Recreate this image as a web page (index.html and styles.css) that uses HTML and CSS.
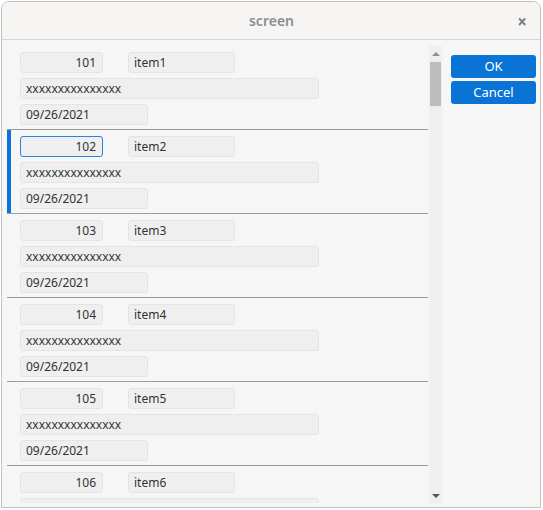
FILE: index.html
```html
<!DOCTYPE html>
<html>
<head>
<meta charset="utf-8">
<link rel="stylesheet" href="styles.css">
</head>
<body>
<div class="window">
  <div class="titlebar">
    <span class="title">screen</span>
    <span class="close">×</span>
  </div>
  <div class="content">
    <div class="listbox">
      <div class="list">
        <div class="row">
          <div class="line"><div class="field num">101</div><div class="field name">item1</div></div>
          <div class="field desc">xxxxxxxxxxxxxxx</div>
          <div class="field date">09/26/2021</div>
        </div>
        <div class="row selected">
          <div class="line"><div class="field num focus">102</div><div class="field name">item2</div></div>
          <div class="field desc">xxxxxxxxxxxxxxx</div>
          <div class="field date">09/26/2021</div>
        </div>
        <div class="row">
          <div class="line"><div class="field num">103</div><div class="field name">item3</div></div>
          <div class="field desc">xxxxxxxxxxxxxxx</div>
          <div class="field date">09/26/2021</div>
        </div>
        <div class="row">
          <div class="line"><div class="field num">104</div><div class="field name">item4</div></div>
          <div class="field desc">xxxxxxxxxxxxxxx</div>
          <div class="field date">09/26/2021</div>
        </div>
        <div class="row">
          <div class="line"><div class="field num">105</div><div class="field name">item5</div></div>
          <div class="field desc">xxxxxxxxxxxxxxx</div>
          <div class="field date">09/26/2021</div>
        </div>
        <div class="row">
          <div class="line"><div class="field num">106</div><div class="field name">item6</div></div>
          <div class="field desc">xxxxxxxxxxxxxxx</div>
          <div class="field date">09/26/2021</div>
        </div>
      </div>
      <div class="scrollbar">
        <div class="arrow up"></div>
        <div class="thumb"></div>
        <div class="spacer"></div>
        <div class="arrow down"></div>
      </div>
    </div>
    <div class="buttons">
      <div class="btn">OK</div>
      <div class="btn">Cancel</div>
    </div>
  </div>
</div>
</body>
</html>
```
FILE: styles.css
```css
html, body {
  margin: 0;
  padding: 0;
  background: #ffffff;
}
body {
  font-family: "Noto Sans", "Open Sans", sans-serif;
  font-size: 12px;
  color: #2e3436;
}
.window {
  margin: 1px 0 0 1px;
  width: 538px;
  height: 505px;
  border: 1px solid #c3c2bf;
  border-radius: 8px 8px 0 0;
  background: #f6f6f6;
  overflow: hidden;
  display: flex;
  flex-direction: column;
}
.titlebar {
  height: 37px;
  flex: none;
  background: #f6f5f4;
  border-bottom: 1px solid #d6d4d1;
  display: flex;
  align-items: center;
  justify-content: center;
  position: relative;
}
.title {
  font-size: 14px;
  font-weight: 600;
  color: #8b8e8f;
  margin-left: 1px;
}
.close {
  position: absolute;
  right: 13px;
  top: 8px;
  font-size: 17px;
  font-weight: 700;
  color: #7b7e80;
}
.content {
  flex: 1;
  display: flex;
  padding: 6px 4px 4px 5px;
  min-height: 0;
}
.listbox {
  width: 435px;
  display: flex;
  min-height: 0;
  overflow: hidden;
}
.list {
  flex: 1;
  overflow: hidden;
}
.row {
  padding: 6px 0 4px 13px;
  height: 73px;
  border-bottom: 1px solid #9d9d9d;
  display: flex;
  flex-direction: column;
  gap: 5px;
  position: relative;
}
.row.selected::before {
  content: "";
  position: absolute;
  left: 0;
  top: 0;
  bottom: 0;
  width: 4px;
  background: #0a74dc;
}
.line {
  display: flex;
  gap: 25px;
}
.field {
  height: 19px;
  line-height: 19px;
  background: #efefef;
  border: 1px solid #e4e4e4;
  border-radius: 3px;
  padding: 0 5px;
  box-sizing: content-box;
  white-space: nowrap;
}
.num {
  width: 70px;
  text-align: right;
  padding-right: 6px;
  padding-left: 5px;
}
.field.num.focus {
  border-color: #2a82e4;
}
.name {
  width: 95px;
}
.desc {
  width: 287px;
}
.date {
  width: 116px;
}
.scrollbar {
  width: 13px;
  flex: none;
  margin-left: 1px;
  background: #efefef;
  display: flex;
  flex-direction: column;
  align-items: center;
}
.arrow {
  width: 0;
  height: 0;
  border-left: 4px solid transparent;
  border-right: 4px solid transparent;
}
.arrow.up {
  margin-top: 6px;
  border-bottom: 4px solid #8f8f8f;
}
.arrow.down {
  margin-bottom: 5px;
  border-top: 4px solid #555;
}
.thumb {
  margin-top: 6px;
  width: 11px;
  height: 44px;
  background: #bdbdbd;
}
.spacer {
  flex: 1;
}
.buttons {
  margin-left: 9px;
  display: flex;
  flex-direction: column;
  gap: 3px;
  padding-top: 9px;
}
.btn {
  width: 85px;
  height: 23px;
  line-height: 23px;
  text-align: center;
  background: #0a74d6;
  color: #ffffff;
  border-radius: 3px;
  font-size: 13px;
}
```
